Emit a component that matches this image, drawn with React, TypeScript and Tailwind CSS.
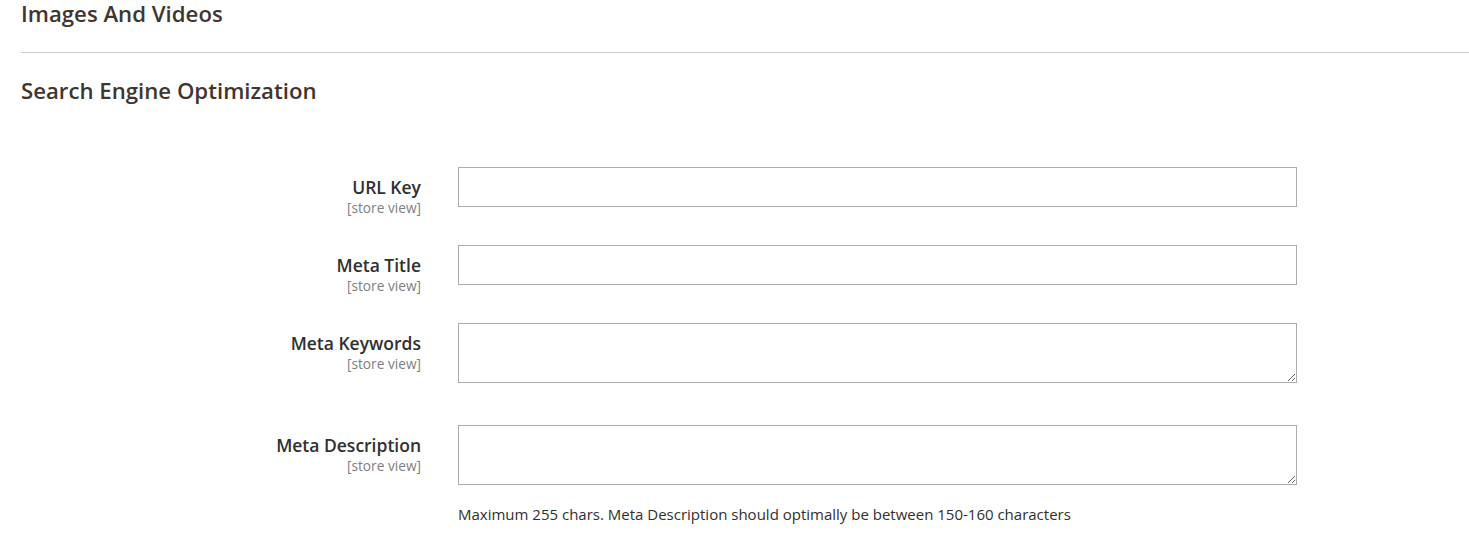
import React from 'react'

const font = { fontFamily: '"Open Sans", "Liberation Sans", sans-serif' }

type Field = { label: string; kind: 'input' | 'textarea'; note?: string }

const fields: Field[] = [
  { label: 'URL Key', kind: 'input' },
  { label: 'Meta Title', kind: 'input' },
  { label: 'Meta Keywords', kind: 'textarea' },
  {
    label: 'Meta Description',
    kind: 'textarea',
    note: 'Maximum 255 chars. Meta Description should optimally be between 150-160 characters',
  },
]

function FieldRow({ field }: { field: Field }) {
  return (
    <div className="flex items-start">
      {/* label column overflows below the control, as in the admin form */}
      <div className="w-[400px] h-[40px] shrink-0 text-right pt-[10px]">
        <div className="text-[17.5px] leading-[21px] font-semibold text-[#303030]">{field.label}</div>
        <div className="text-[13.7px] leading-[19px] text-[#808080]">[store view]</div>
      </div>
      <div className="ml-[37px] w-[839px]">
        {field.kind === 'input' ? (
          <input type="text" className="block w-full h-[40px] border border-[#adadad] bg-white px-3 outline-none" />
        ) : (
          <textarea className="block w-full h-[60px] border border-[#adadad] bg-white px-3 py-2 outline-none resize-y" />
        )}
        {field.note && (
          <div className="mt-[19px] text-[15px] leading-[20px] text-[#303030]">{field.note}</div>
        )}
      </div>
    </div>
  )
}

export default function App() {
  return (
    <div className="min-h-screen bg-white pl-[21px]" style={font}>
      {/* Images And Videos */}
      <div className="h-[53px] border-b border-[#cccccc]">
        <h2 className="text-[22.2px] leading-[27px] text-[#41362f] font-semibold">Images And Videos</h2>
      </div>

      {/* Search Engine Optimization */}
      <h2 className="mt-[25px] text-[22.2px] leading-[26px] text-[#41362f] font-semibold">Search Engine Optimization</h2>

      <div className="mt-[63px] flex flex-col">
        <div className="mb-[38px]"><FieldRow field={fields[0]} /></div>
        <div className="mb-[38px]"><FieldRow field={fields[1]} /></div>
        <div className="mb-[42px]"><FieldRow field={fields[2]} /></div>
        <FieldRow field={fields[3]} />
      </div>
    </div>
  )
}
